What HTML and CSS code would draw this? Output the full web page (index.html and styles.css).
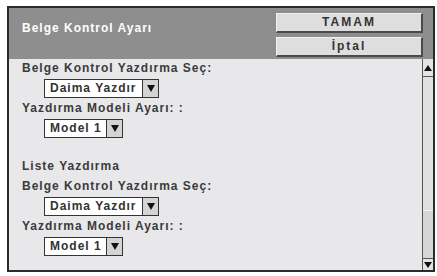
FILE: index.html
```html
<!DOCTYPE html>
<html>
<head>
<meta charset="utf-8">
<link rel="stylesheet" href="styles.css">
</head>
<body>
<div class="frame">
  <div class="header">
    <div class="title">Belge Kontrol Ayarı</div>
    <div class="buttons">
      <div class="btn">TAMAM</div>
      <div class="btn">İptal</div>
    </div>
  </div>
  <div class="body">
    <div class="content">
      <div class="inner">
        <div class="label">Belge Kontrol Yazdırma Seç:</div>
        <div class="select wide"><span class="val">Daima Yazdır</span><span class="arrow"><svg width="8" height="7" viewBox="0 0 8 7"><path d="M0 0H8L4 7Z" fill="#111"/></svg></span></div>
        <div class="label">Yazdırma Modeli Ayarı: :</div>
        <div class="select narrow"><span class="val">Model 1</span><span class="arrow"><svg width="8" height="7" viewBox="0 0 8 7"><path d="M0 0H8L4 7Z" fill="#111"/></svg></span></div>
        <div class="gap"></div>
        <div class="label">Liste Yazdırma</div>
        <div class="label">Belge Kontrol Yazdırma Seç:</div>
        <div class="select wide"><span class="val">Daima Yazdır</span><span class="arrow"><svg width="8" height="7" viewBox="0 0 8 7"><path d="M0 0H8L4 7Z" fill="#111"/></svg></span></div>
        <div class="label">Yazdırma Modeli Ayarı: :</div>
        <div class="select narrow"><span class="val">Model 1</span><span class="arrow"><svg width="8" height="7" viewBox="0 0 8 7"><path d="M0 0H8L4 7Z" fill="#111"/></svg></span></div>
      </div>
    </div>
    <div class="scrollbar">
      <div class="sb-btn up"><svg width="8" height="6" viewBox="0 0 8 6"><path d="M4 0L8 6H0Z" fill="#111"/></svg></div>
      <div class="thumb"></div>
      <div class="track"></div>
      <div class="sb-btn down"><svg width="8" height="6" viewBox="0 0 8 6"><path d="M0 0H8L4 6Z" fill="#111"/></svg></div>
    </div>
  </div>
</div>
</body>
</html>
```
FILE: styles.css
```css
body {
  margin: 0;
  background: #ffffff;
  font-family: "Liberation Sans", Arial, sans-serif;
}
.frame {
  margin: 6px 0 0 7px;
  width: 428px;
  height: 266px;
  box-sizing: border-box;
  border: 2px solid #2b2b2b;
  display: flex;
  flex-direction: column;
  background: #e8e8ea;
}
.header {
  flex: none;
  height: 51px;
  box-sizing: border-box;
  background: #8e8e8e;
  display: flex;
  justify-content: space-between;
  align-items: flex-start;
  padding: 5px 10px 0 13px;
}
.title {
  color: #ffffff;
  font-weight: bold;
  font-size: 12px;
  letter-spacing: 1px;
  line-height: 20px;
  margin-top: 5px;
}
.buttons {
  display: flex;
  flex-direction: column;
  gap: 4px;
  width: 147px;
}
.btn {
  height: 20px;
  box-sizing: border-box;
  background: #dedede;
  border: 1px solid #f0f0f0;
  border-right: 2px solid #4a4a4a;
  border-bottom: 2px solid #4a4a4a;
  text-align: center;
  font-weight: bold;
  font-size: 12px;
  letter-spacing: 2px;
  color: #333333;
  line-height: 17px;
}
.body {
  flex: 1;
  display: flex;
  min-height: 0;
}
.content {
  flex: 1;
  overflow: hidden;
  padding-left: 13px;
}
.inner {
  margin-top: -1px;
}
.label {
  font-size: 12px;
  font-weight: bold;
  letter-spacing: 1px;
  color: #3b3b3b;
  line-height: 20px;
  white-space: nowrap;
}
.select {
  margin: 1px 0 0 22px;
  height: 19px;
  box-sizing: border-box;
  display: flex;
  border: 1px solid #333333;
  background: #ffffff;
}
.select.wide { width: 115px; }
.select.narrow { width: 79px; }
.val {
  flex: 1;
  padding-left: 5px;
  font-size: 12px;
  font-weight: bold;
  letter-spacing: 1px;
  color: #333333;
  line-height: 17px;
  white-space: nowrap;
}
.arrow {
  width: 15px;
  border-left: 1px solid #333333;
  background: #d4d4d4;
  display: flex;
  align-items: center;
  justify-content: center;
}
.gap { height: 18px; }
.scrollbar {
  width: 11px;
  box-sizing: border-box;
  border-left: 1px solid #555555;
  display: flex;
  flex-direction: column;
  background: #d6d6d6;
}
.sb-btn {
  flex: none;
  display: flex;
  align-items: center;
  justify-content: center;
  background: #e4e4e4;
}
.sb-btn.up {
  height: 18px;
  border-bottom: 1px solid #555555;
  box-sizing: border-box;
}
.sb-btn.down {
  height: 12px;
  border-top: 1px solid #555555;
  box-sizing: border-box;
}
.thumb {
  flex: none;
  height: 133px;
  background: #e0e0e0;
  border-bottom: 1px solid #f4f4f4;
}
.track { flex: 1; }
```
